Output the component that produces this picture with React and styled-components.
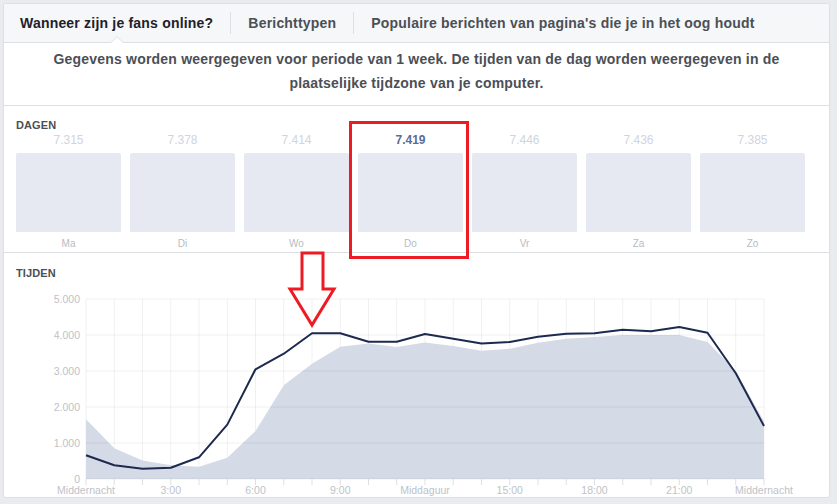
import React from 'react';
import styled, { createGlobalStyle } from 'styled-components';

const GlobalStyle = createGlobalStyle`
  html, body {
    margin: 0;
    padding: 0;
    background: #e9ebee;
    font-family: "Liberation Sans", Arial, Helvetica, sans-serif;
  }
`;

const DAYS = [
  { label: 'Ma', value: '7.315' },
  { label: 'Di', value: '7.378' },
  { label: 'Wo', value: '7.414' },
  { label: 'Do', value: '7.419', active: true },
  { label: 'Vr', value: '7.446' },
  { label: 'Za', value: '7.436' },
  { label: 'Zo', value: '7.385' },
];

// fans online per uur (0..24), lijn = geselecteerde dag, vlak = gemiddelde
const LINE = [658, 380, 287, 315, 602, 1510, 3046, 3481, 4046, 4046, 3815, 3815, 4028, 3898, 3768, 3805, 3953, 4037, 4046, 4148, 4102, 4222, 4065, 2935, 1472];
const AREA = [1657, 852, 518, 380, 343, 593, 1333, 2602, 3204, 3676, 3768, 3667, 3790, 3694, 3565, 3620, 3787, 3898, 3944, 4000, 4000, 4000, 3805, 3000, 1600];

const X_LABELS = ['Middernacht', '3:00', '6:00', '9:00', 'Middaguur', '15:00', '18:00', '21:00', 'Middernacht'];
const Y_LABELS = ['0', '1.000', '2.000', '3.000', '4.000', '5.000'];

// chart coords are page coords, shifted by the svg's own position
const LEFT = 86;
const STEP = 28.25;
const BASE = 478;
const PER = 0.036;
const px = h => LEFT + h * STEP;
const py = v => BASE - v * PER;

const App = () => {
  const linePts = LINE.map((v, h) => `${px(h).toFixed(1)},${py(v).toFixed(1)}`).join(' ');
  const areaPath =
    `M${px(0)},${BASE} ` +
    AREA.map((v, h) => `L${px(h).toFixed(1)},${py(v).toFixed(1)}`).join(' ') +
    ` L${px(24)},${BASE} Z`;
  const hours = Array.from({ length: 25 }, (_, h) => h);

  return (
    <Page>
      <GlobalStyle />
      <Card>
        <Tabs>
          <Tab active>Wanneer zijn je fans online?</Tab>
          <Divider />
          <Tab>Berichttypen</Tab>
          <Divider />
          <Tab>Populaire berichten van pagina's die je in het oog houdt</Tab>
        </Tabs>

        <Intro>
          Gegevens worden weergegeven voor periode van 1 week. De tijden van de dag worden weergegeven in de
          plaatselijke tijdzone van je computer.
        </Intro>

        <Section>
          <Heading>DAGEN</Heading>
          <DayGrid>
            {DAYS.map(day => (
              <DayColumn key={day.label}>
                <DayValue active={day.active}>{day.value}</DayValue>
                <DayBar />
                <DayLabel>{day.label}</DayLabel>
                {day.active && <Highlight />}
              </DayColumn>
            ))}
          </DayGrid>
        </Section>

        <TimesSection>
          <Heading>TIJDEN</Heading>
          <Chart width="790" height="218" viewBox="0 0 790 218">
            <g transform="translate(-16,-279)">
              {hours.map(h => (
                <line key={'v' + h} x1={px(h)} x2={px(h)} y1={298} y2={BASE} stroke="rgba(0,0,0,0.06)" />
              ))}
              <path d={areaPath} fill="#d4dae6" />
              {Y_LABELS.map((t, i) => (
                <line key={'h' + i} x1={LEFT} x2={px(24)} y1={BASE - i * 36} y2={BASE - i * 36} stroke="rgba(0,0,0,0.06)" />
              ))}
              {hours.map(h => (
                <line key={'t' + h} x1={px(h)} x2={px(h)} y1={BASE} y2={BASE + 6} stroke="#dddfe2" />
              ))}
              <polyline points={linePts} fill="none" stroke="#1d2a4f" strokeWidth="2" strokeLinejoin="round" />
              {Y_LABELS.map((t, i) => (
                <AxisText key={'yl' + i} x={80} y={BASE - i * 36 + 4} textAnchor="end">
                  {t}
                </AxisText>
              ))}
              {X_LABELS.map((t, i) => (
                <AxisText key={'xl' + i} x={px(i * 3)} y={493} textAnchor="middle">
                  {t}
                </AxisText>
              ))}
            </g>
          </Chart>
        </TimesSection>

        <Arrow width="50" height="82" viewBox="0 0 50 82">
          <polygon
            points="16,4 37,4 37,40 48,40 26,76 4,40 16,40"
            fill="none"
            stroke="#ed1c24"
            strokeWidth="3"
          />
        </Arrow>
      </Card>
    </Page>
  );
};

const Page = styled.div`
  padding: 3px 7px 6px 3px;
`;

const Card = styled.div`
  position: relative;
  box-sizing: border-box;
  width: 827px;
  height: 495px;
  background: #fff;
  border: 1px solid #dddfe2;
  border-radius: 3px;
  overflow: hidden;
`;

const Tabs = styled.div`
  display: flex;
  align-items: center;
  height: 38px;
  padding: 0 0 0 16px;
  background: #f6f7f9;
  border-bottom: 1px solid #dddfe2;
`;

const Tab = styled.div`
  position: relative;
  height: 38px;
  line-height: 38px;
  font-size: 14px;
  font-weight: bold;
  letter-spacing: 0.2px;
  color: ${props => (props.active ? '#1d2129' : '#4b4f56')};
  white-space: nowrap;

  ${props =>
    props.active &&
    `
    &::before, &::after {
      content: '';
      position: absolute;
      left: 50%;
      margin-left: -7px;
      width: 0;
      height: 0;
      border-left: 7px solid transparent;
      border-right: 7px solid transparent;
    }
    &::before {
      bottom: -1px;
      border-bottom: 7px solid #dddfe2;
    }
    &::after {
      bottom: -1px;
      border-bottom: 6px solid #fff;
      margin-left: -6px;
      border-left-width: 6px;
      border-right-width: 6px;
    }
  `}
`;

const Divider = styled.div`
  width: 1px;
  height: 22px;
  margin: 0 17px;
  background: #dddfe2;
`;

const Intro = styled.div`
  padding: 4px 30px 10px;
  font-size: 14px;
  font-weight: bold;
  line-height: 24px;
  letter-spacing: 0.2px;
  color: #4b4f56;
  text-align: center;
  border-bottom: 1px solid #dddfe2;
`;

const Section = styled.div`
  padding: 12px 24px 1px 12px;
  border-bottom: 1px solid #dddfe2;
`;

const TimesSection = styled.div`
  padding: 13px 0 0 12px;
`;

const Heading = styled.div`
  font-size: 11px;
  line-height: 14px;
  font-weight: bold;
  letter-spacing: 0.1px;
  color: #4b4f56;
`;

const DayGrid = styled.div`
  display: grid;
  grid-template-columns: repeat(7, 1fr);
  column-gap: 9px;
`;

const DayColumn = styled.div`
  position: relative;
  display: flex;
  flex-direction: column;
  align-items: stretch;
  text-align: center;
`;

const DayValue = styled.div`
  font-size: 12px;
  line-height: 16px;
  font-weight: ${props => (props.active ? 'bold' : 'normal')};
  color: ${props => (props.active ? '#5b6c93' : '#cfd4e0')};
`;

const DayBar = styled.div`
  height: 79px;
  margin-top: 5px;
  background: #e6e9f2;
  border-radius: 2px 2px 0 0;
`;

const DayLabel = styled.div`
  margin-top: 5px;
  font-size: 10px;
  line-height: 14px;
  color: #b7bbc3;
`;

const Highlight = styled.div`
  position: absolute;
  top: -11px;
  bottom: -8px;
  left: -9px;
  right: -6px;
  border: 3px solid #ed1c24;
  pointer-events: none;
`;

const Chart = styled.svg`
  display: block;
  overflow: visible;
`;

const AxisText = styled.text`
  font-family: "Liberation Sans", Arial, sans-serif;
  font-size: 10.5px;
  fill: #bec2c9;
`;

const Arrow = styled.svg`
  position: absolute;
  left: 282px;
  top: 245px;
  overflow: visible;
`;

export default App;
